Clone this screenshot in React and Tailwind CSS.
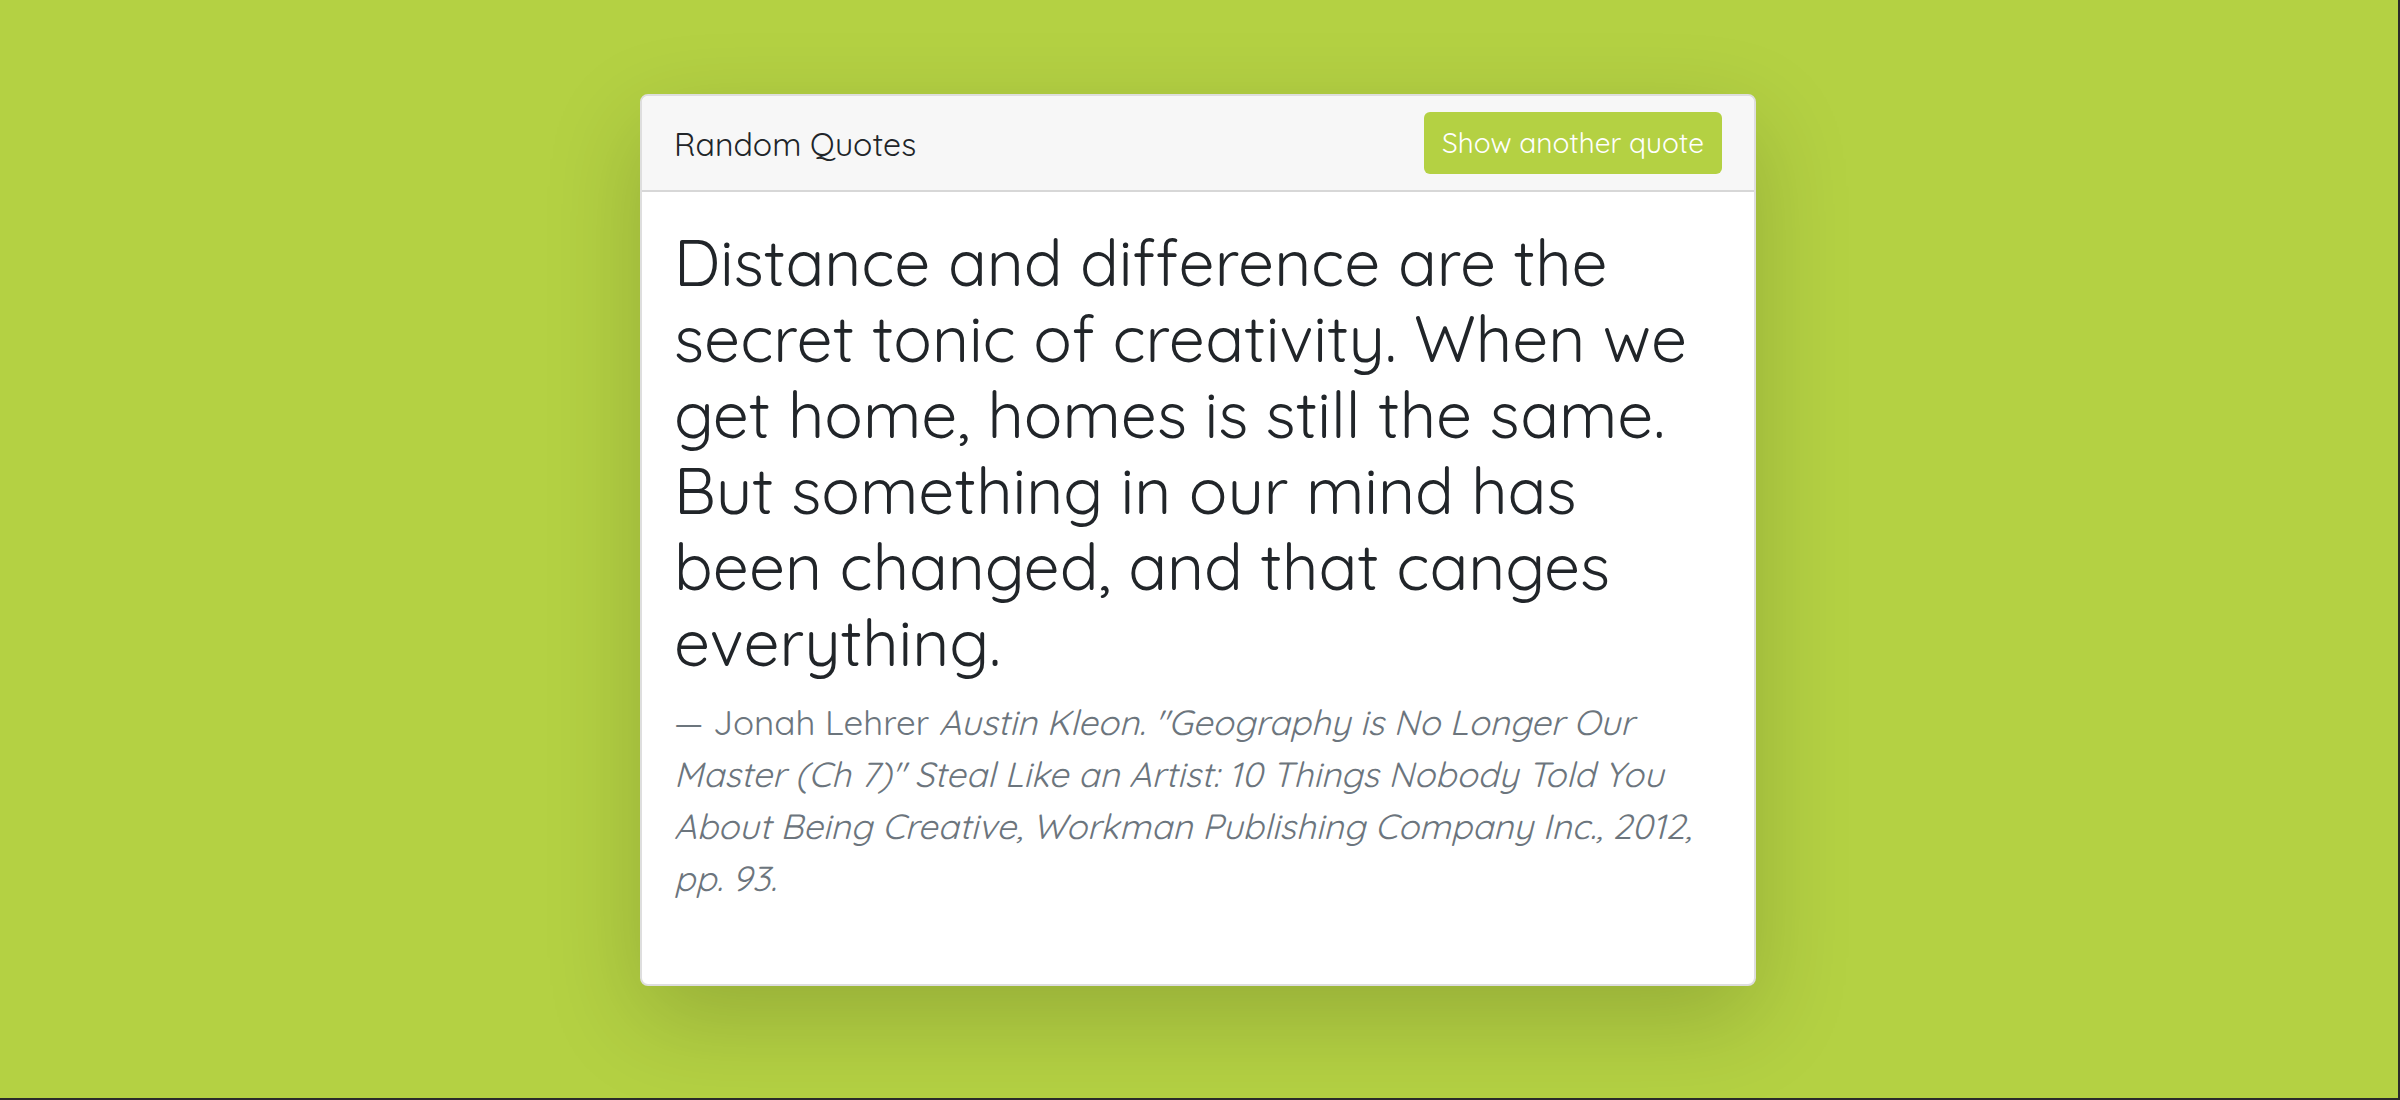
export default function App() {
  return (
    <main className="min-h-screen border-r-2 border-b-2 border-[#2b2b2b] bg-[#b4d143] pt-[94px] pr-0.5 font-['Quicksand','Lato',sans-serif] text-[#212529]">
      <section className="mx-auto w-full max-w-[1116px] rounded-lg border-2 border-[#dedede] bg-white shadow-[0_32px_96px_rgba(0,0,0,0.176)]">
        <header className="flex items-center justify-between rounded-t-md border-b-2 border-[#d7d7d7] bg-[#f7f7f7] px-8 py-4">
          <h1 className="pt-0.5 text-[32px] leading-[48px]">Random Quotes</h1>
          <button type="button" className="h-[62px] rounded-md bg-[#b4d143] px-[18px] text-[28px] text-white">Show another quote</button>
        </header>
        <blockquote className="px-8 pt-8 pb-20">
          <p className="text-[64px] leading-[76px]">
            Distance and difference are the secret tonic of creativity. When we get home, homes is still the same. But something in our mind has been changed, and that canges everything.
          </p>
          <footer className="mt-4 text-[35px] leading-[52px] text-[#6c757d]">
            — Jonah Lehrer <cite>Austin Kleon. "Geography is No Longer Our Master (Ch 7)" Steal Like an Artist: 10 Things Nobody Told You About Being Creative, Workman Publishing Company Inc., 2012, pp. 93.</cite>
          </footer>
        </blockquote>
      </section>
    </main>
  );
}
